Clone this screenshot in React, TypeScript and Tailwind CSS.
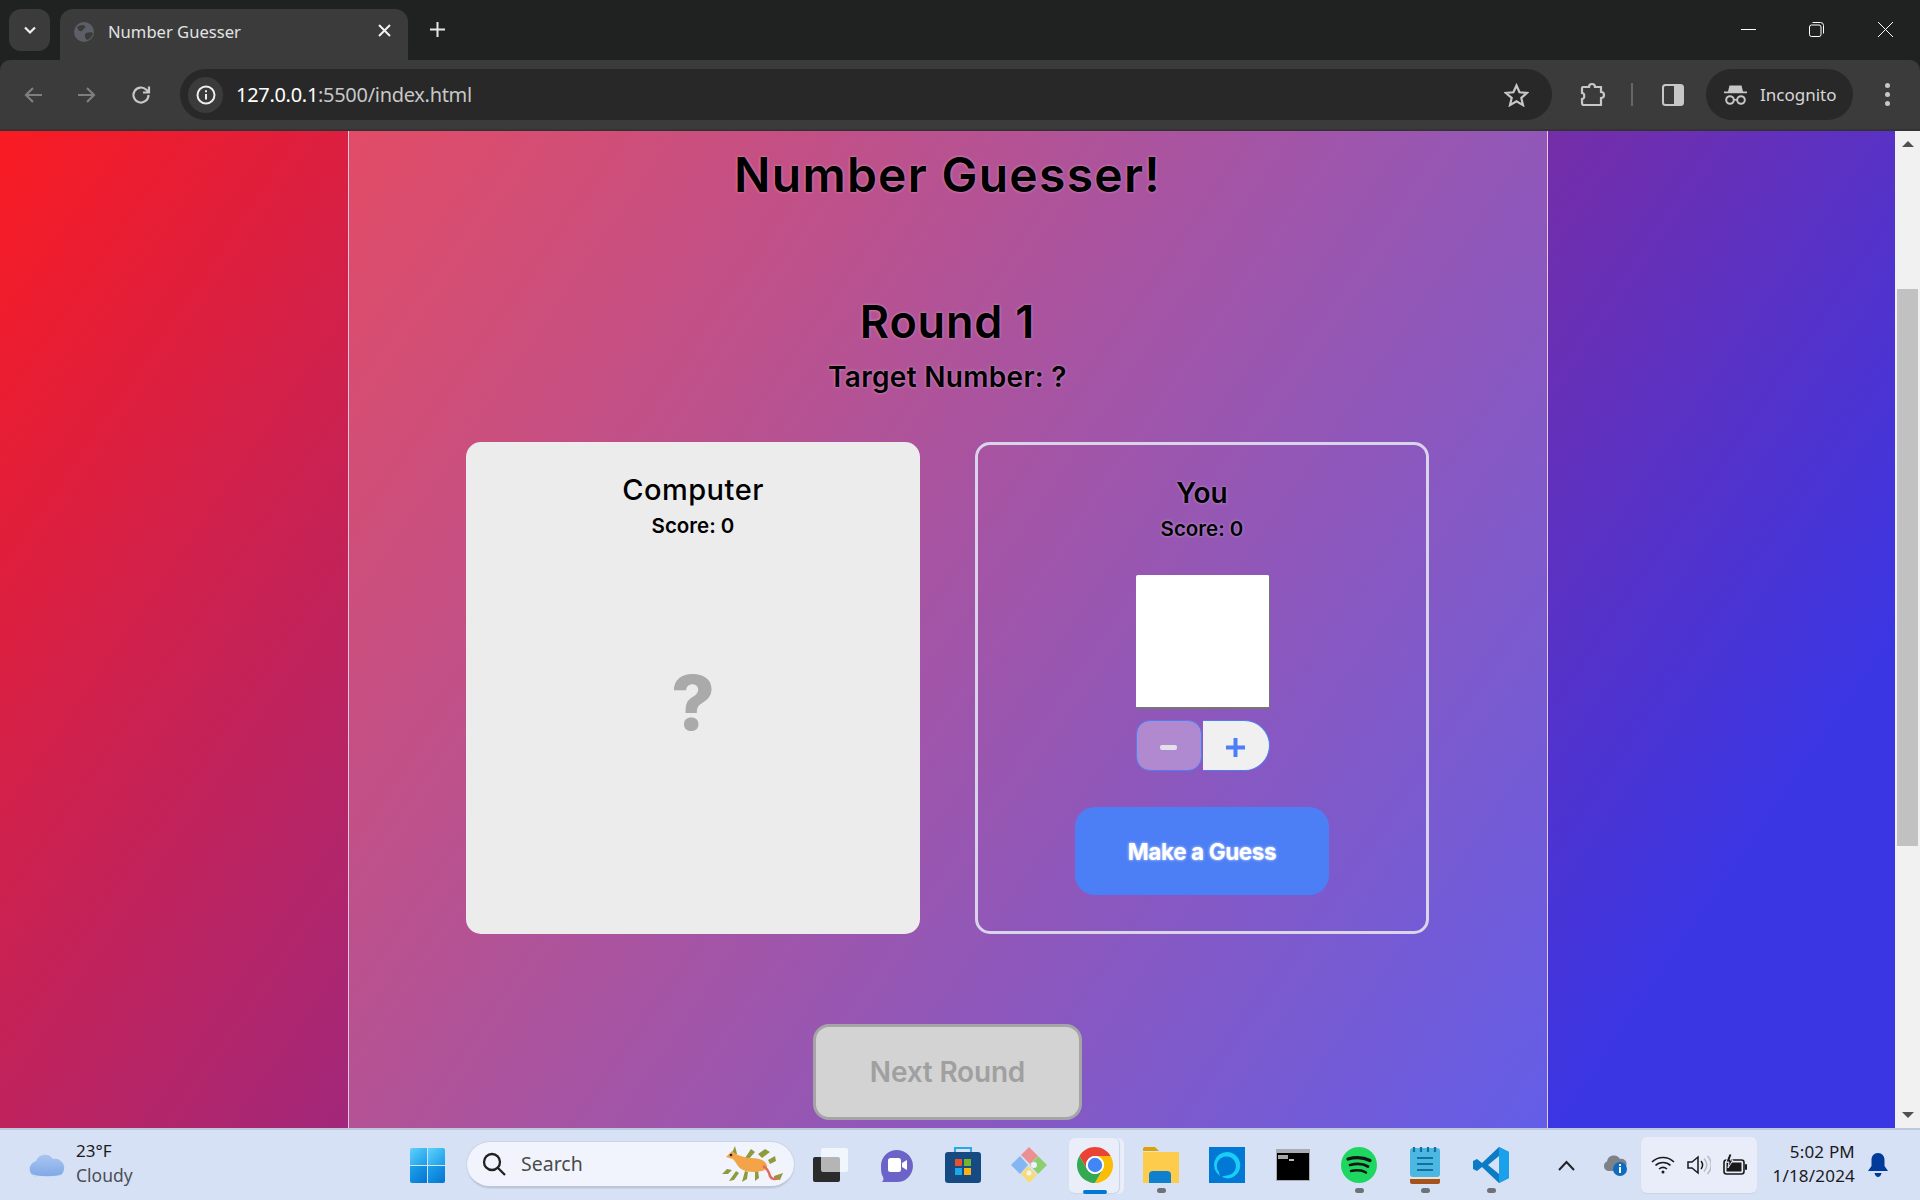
import React from "react";

function Back({ className }: { className?: string }) {
  return (
    <svg className={className} width="20" height="18" viewBox="0 0 20 18" fill="none" stroke="currentColor" strokeWidth="2.2">
      <path d="M19 9H3M10 2L3 9l7 7" />
    </svg>
  );
}

function Chrome() {
  return (
    <header className="shrink-0 bg-[#202221]">
      <div className="flex h-[60px] items-end pl-[9px]">
        <div className="mb-[9px] flex h-[42px] w-[41px] items-center justify-center rounded-[12px] bg-[#3b3b3b]">
          <svg width="14" height="9" viewBox="0 0 14 9" fill="none" stroke="#f0f0f0" strokeWidth="2.2"><path d="M2 1.5l5 5 5-5" /></svg>
        </div>
        <div className="relative ml-[10px] flex h-[51px] w-[348px] rounded-t-[13px] bg-[#3b3b3b] pl-[13px] pt-[12px]">
          <svg width="22" height="22" viewBox="0 0 22 22" className="shrink-0">
            <circle cx="11" cy="11" r="10" fill="#5c6066" />
            <path d="M4 6c3-2 6-3 8-1 1 2-2 3-3 5-2 1-4-1-5-4zM13 12c3-1 6-1 7 0-1 4-3 6-6 7-2-2-3-5-1-7z" fill="#3b3b3b" />
          </svg>
          <span className="ml-[13px] text-[16.6px] leading-[22px] text-[#e3e3e3] [font-family:'Noto_Sans',sans-serif]">Number Guesser</span>
          <svg className="absolute left-[318px] top-[15px]" width="13" height="13" viewBox="0 0 13 13" stroke="#f2f2f2" strokeWidth="2"><path d="M1 1l11 11M12 1L1 12" /></svg>
        </div>
        <svg className="mb-[23px] ml-[22px]" width="15" height="15" viewBox="0 0 15 15" stroke="#e6e6e6" strokeWidth="2"><path d="M7.5 0v15M0 7.5h15" /></svg>
        <div className="ml-auto mb-[23px] flex items-center pr-[27px]">
          <svg width="15" height="15" viewBox="0 0 15 15" stroke="#fff" strokeWidth="1"><path d="M0 7.5h15" /></svg>
          <svg className="ml-[53px]" width="15" height="15" viewBox="0 0 15 15" fill="none" stroke="#fff" strokeWidth="1"><rect x=".5" y="3" width="11.5" height="11.5" rx="2" /><path d="M3.5.5h8a3 3 0 013 3v8" /></svg>
          <svg className="ml-[54px]" width="15" height="15" viewBox="0 0 15 15" stroke="#fff" strokeWidth="1"><path d="M0 0l15 15M15 0L0 15" /></svg>
        </div>
      </div>
      <div className="flex h-[71px] items-start rounded-t-[10px] border-b-2 border-[#333] bg-[#3b3b3b] pl-[23px] pt-[9px]">
        <div className="flex h-[51px] items-center">
          <Back className="text-[#7f7f7f]" />
          <Back className="ml-[34px] rotate-180 text-[#7f7f7f]" />
          <svg className="ml-[34px]" width="20" height="20" viewBox="0 0 20 20" fill="none" stroke="#c7c7c7" strokeWidth="2.2"><path d="M17.5 10a7.5 7.5 0 11-2.2-5.3L18 7.5M18 1.5v6h-6" /></svg>
        </div>
        <div className="ml-[29px] flex h-[51px] w-[1372px] items-center rounded-full bg-[#282828] pl-[8px] pr-[23px]">
          <div className="flex h-[36px] w-[35px] items-center justify-center rounded-full bg-[#3b3b3b]">
            <svg width="20" height="20" viewBox="0 0 20 20" fill="none" stroke="#eee" strokeWidth="2"><circle cx="10" cy="10" r="8.5" /><path d="M10 9v5.5M10 5.2v2" /></svg>
          </div>
          <span className="ml-[13px] text-[20px] leading-none text-[#c7c7c7] [font-family:'Noto_Sans',sans-serif] tracking-[-0.3px]"><span className="text-white">127.0.0.1</span>:5500/index.html</span>
          <svg className="ml-auto" width="25" height="24" viewBox="0 0 25 24" fill="none" stroke="#c7c7c7" strokeWidth="2.2"><path d="M12.5 2.5l3 6.8 7.4.7-5.6 4.9 1.7 7.2-6.5-3.8-6.5 3.8 1.7-7.2L2 10l7.4-.7z" /></svg>
        </div>
        <div className="flex h-[51px] items-center">
          <svg className="ml-[28px]" width="26" height="26" viewBox="0 0 26 26" fill="none" stroke="#c7c7c7" strokeWidth="2.2"><path d="M3 5h6c0-4 6-4 6 0h6v5c4 0 4 6 0 6v7H4c-1.500 0-2-1-2-2v-4c3 0 3-6 0-6V6c0-.5.500-1 1-1z" /></svg>
          <div className="ml-[25px] h-[23px] w-[2px] bg-[#666]" />
          <svg className="ml-[29px]" width="22" height="22" viewBox="0 0 22 22"><rect x="1" y="1" width="20" height="20" rx="2.500" fill="none" stroke="#c7c7c7" strokeWidth="2" /><path d="M12 1h7a2 2 0 012 2v16a2 2 0 01-2 2h-7z" fill="#c7c7c7" /></svg>
          <div className="ml-[22px] flex h-[51px] w-[147px] items-center rounded-full bg-[#282828] pl-[18px]">
            <svg width="23" height="23" viewBox="0 0 23 23" fill="#c7c7c7"><path d="M5.500 2.500h12l1.500 6h4v1.800H0V8.500h4z" /><circle cx="6" cy="17" r="3.800" fill="none" stroke="#c7c7c7" strokeWidth="2" /><circle cx="17" cy="17" r="3.800" fill="none" stroke="#c7c7c7" strokeWidth="2" /><path d="M9.500 16h4v1.600h-4z" /></svg>
            <span className="ml-[13px] text-[17px] text-[#d7d7d7] [font-family:'Noto_Sans',sans-serif]">Incognito</span>
          </div>
          <div className="ml-[32px] flex flex-col gap-[4px]">
            <i className="block size-[5px] rounded-full bg-[#c7c7c7]" />
            <i className="block size-[5px] rounded-full bg-[#c7c7c7]" />
            <i className="block size-[5px] rounded-full bg-[#c7c7c7]" />
          </div>
        </div>
      </div>
    </header>
  );
}

function GamePanel() {
  const shadow = "[text-shadow:0_0_3px_rgba(255,255,255,0.45)]";
  return (
    <main className="flex min-w-0 flex-1 justify-center overflow-hidden bg-[linear-gradient(124.5deg,#f91b22_0%,#3a36e4_87.3%)] [font-family:Inter,sans-serif]">
      <div className="flex h-full w-[1200px] flex-col items-center border-x border-[#e8c8e0] bg-white/20">
        <h1 className={`mt-[21px] text-[48px] font-semibold leading-[46px] tracking-[1.27px] text-black ${shadow}`}>Number Guesser!</h1>
        <h2 className={`mt-[102px] text-[45px] font-semibold leading-[44px] tracking-[0.8px] text-black ${shadow}`}>Round 1</h2>
        <p className={`mt-[18px] text-[28px] font-semibold leading-[30px] tracking-[0.3px] text-black ${shadow}`}>Target Number: ?</p>
        <div className="mt-[50px] flex gap-[55px]">
          <section className="flex h-[492px] w-[454px] flex-col items-center rounded-[15px] bg-[#ececec]">
            <h3 className="mt-[32px] text-[29px] font-medium leading-[32px] tracking-[0.5px] text-black">Computer</h3>
            <p className="mt-[6px] text-[20.5px] font-semibold leading-[28px] text-black">Score: 0</p>
            <span className="mt-[120px] text-[76px] font-extrabold leading-[84px] text-[#aaaaaa]">?</span>
          </section>
          <section className="flex h-[492px] w-[454px] flex-col items-center rounded-[15px] border-[3px] border-[#d9d4ea]">
            <h3 className={`mt-[32px] text-[28px] font-semibold leading-[32px] text-black ${shadow}`}>You</h3>
            <p className={`mt-[6px] text-[20.5px] font-semibold leading-[28px] text-black ${shadow}`}>Score: 0</p>
            <div className="mt-[32px] ml-px h-[134px] w-[134px] rounded-[2px] border-b-2 border-r border-[#767676] bg-white" />
            <div className="mt-[11px] ml-px flex h-[51px] w-[134px]">
              <button className="flex w-[66px] items-center justify-center rounded-[14px] border border-[#4c7ff5] bg-white/30 text-[32px] font-bold text-[#e4e0ea]">
                <i className="mt-[4px] block h-[5px] w-[17px] rounded-[2px] bg-[#e4e0ea]" />
              </button>
              <button className="ml-px flex flex-1 items-center justify-center rounded-r-full border-y border-r border-[#4c7ff5] bg-[#f0f0f0]">
                <svg className="mt-[3px]" width="19" height="19" viewBox="0 0 19 19" stroke="#4c7ff5" strokeWidth="4"><path d="M9.500 0v19M0 9.500h19" /></svg>
              </button>
            </div>
            <button className="mt-[36px] h-[88px] w-[254px] rounded-[20px] bg-[#4c7ff5] pt-[2px] text-[22.5px] font-bold tracking-[-0.4px] text-white [text-shadow:0_0_3px_rgba(255,255,255,0.8)]">Make a Guess</button>
          </section>
        </div>
        <button className="mt-[90px] h-[96px] w-[269px] shrink-0 rounded-[16px] border-[3px] border-[#a5a5a5] bg-[#d3d3d3] text-[28px] font-semibold tracking-[-0.2px] text-[#a0a0a0]">Next Round</button>
      </div>
    </main>
  );
}

function Scrollbar() {
  return (
    <aside className="flex w-[25px] shrink-0 flex-col items-center bg-[#f1f1f1]">
      <svg className="mt-[10px]" width="12" height="6" viewBox="0 0 12 6" fill="#505050"><path d="M6 0l6 6H0z" /></svg>
      <div className="mt-[142px] h-[557px] w-[21px] bg-[#c1c1c1]" />
      <svg className="mt-[266px]" width="12" height="6" viewBox="0 0 12 6" fill="#505050"><path d="M6 6L0 0h12z" /></svg>
    </aside>
  );
}

function Cloud() {
  return (
    <svg width="36" height="24" viewBox="0 0 36 24">
      <defs>
        <linearGradient id="cl" x1="0" y1="0" x2="0" y2="1"><stop offset="0" stopColor="#a9c6f2" /><stop offset="1" stopColor="#7fa8e6" /></linearGradient>
      </defs>
      <path d="M8 24a8 8 0 01-1-15.800A9.500 9.500 0 0124 6a8.500 8.500 0 014 18z" fill="url(#cl)" />
      <path d="M2 21c8 3 25 3 32 0-2 3-4 3-6 3H8c-3 0-5-1-6-3z" fill="#cfe0f8" />
    </svg>
  );
}

function WinLogo() {
  return (
    <svg width="35" height="35" viewBox="0 0 35 35" className="shrink-0">
      <defs>
        <linearGradient id="w1" x1="0" y1="0" x2="1" y2="1"><stop offset="0" stopColor="#5fd2fb" /><stop offset="1" stopColor="#1a9be8" /></linearGradient>
        <linearGradient id="w2" x1="0" y1="0" x2="1" y2="1"><stop offset="0" stopColor="#1ca4ec" /><stop offset="1" stopColor="#0673d0" /></linearGradient>
      </defs>
      <path d="M0 2a2 2 0 012-2h15v17H0z" fill="url(#w1)" />
      <path d="M18 0h15a2 2 0 012 2v15H18z" fill="url(#w1)" />
      <path d="M0 18h17v17H2a2 2 0 01-2-2z" fill="url(#w2)" />
      <path d="M18 18h17v15a2 2 0 01-2 2H18z" fill="url(#w2)" />
    </svg>
  );
}

function SeaDragon() {
  return (
    <svg width="65" height="38" viewBox="0 0 65 38" className="shrink-0">
      <g fill="#8e9a3c">
        <path d="M10 10l4-9 2 8zM24 13l6-9 4 3-7 8zM37 9l7-5 5 3-8 6zM47 15l7-4 1 5-6 3zM15 26L8 36l5-1 5-7zM24 26l-3 11 5-3 1-7zM34 25l0 11 4-3-1-8zM6 24l-5 5 6 0 4-4zM53 31l9-3-3 7-6-1z" />
      </g>
      <path d="M5 12l6-6 4 3c4 2 10 4 15 4 8 0 15 2 16 8 1 4-6 6-14 6-8 0-14-3-17-9l-3-4z" fill="#f3a448" />
      <path d="M42 21c4 2 6 6 7 10 1 3 5 4 8 2" fill="none" stroke="#e0685c" strokeWidth="2.500" />
      <circle cx="10" cy="10" r="1.300" fill="#222" />
    </svg>
  );
}

function SearchBox() {
  return (
    <div className="ml-[22px] flex h-[46px] w-[327px] shrink-0 items-center rounded-full border-b-2 border-[#bcc6da] bg-[#f1f4fc] pl-[15px] pr-[8px] shadow-[0_0_0_1px_#ccd5e6]">
      <svg width="24" height="24" viewBox="0 0 24 24" fill="none" stroke="#202020" strokeWidth="2.300"><circle cx="10" cy="10" r="8" /><path d="M16 16l7 7" /></svg>
      <span className="ml-[15px] text-[19.5px] text-[#4a4a4a] [font-family:'Noto_Sans',sans-serif]">Search</span>
      <div className="ml-auto"><SeaDragon /></div>
    </div>
  );
}

const icons: { key: string; dot?: boolean; active?: boolean; svg: React.ReactNode }[] = [
  { key: "task", svg: (
    <svg width="36" height="36" viewBox="0 0 36 36"><rect x="0" y="10" width="27" height="25" rx="2" fill="#2b2b2b" /><rect x="8" y="1" width="27" height="24" rx="2" fill="#ffffff" fillOpacity=".65" /></svg>
  ) },
  { key: "meet", svg: (
    <svg width="36" height="36" viewBox="0 0 36 36"><path d="M2 18a16 16 0 1116 17H3c2-2 2-4 0-7-1-3-1-6-1-10z" fill="#6b63c8" /><rect x="9" y="11" width="13" height="14" rx="2.500" fill="#fff" /><path d="M23 16l5-3v10l-5-3z" fill="#fff" /></svg>
  ) },
  { key: "store", svg: (
    <svg width="36" height="38" viewBox="0 0 36 38"><path d="M10 8V2h16v6" fill="none" stroke="#2aa7e8" strokeWidth="2" /><rect y="6" width="36" height="31" rx="3" fill="#164a82" /><rect x="10" y="13" width="7" height="7" fill="#e8512d" /><rect x="19" y="13" width="7" height="7" fill="#75b52d" /><rect x="10" y="22" width="7" height="7" fill="#1da6e8" /><rect x="19" y="22" width="7" height="7" fill="#fbb313" /></svg>
  ) },
  { key: "gem", svg: (
    <svg width="36" height="36" viewBox="0 0 36 36"><path d="M18 0l9 9-8 8-9-9z" fill="#ec8f93" /><path d="M27 9l9 9-9 9-8-9z" fill="#8dcf6e" /><path d="M17 19l9 9-8 8-8-9z" fill="#f6dc78" /><path d="M9 9l8 9-8 9-9-9z" fill="#86b5f3" /><circle cx="23" cy="18" r="3" fill="#eef2fb" /><circle cx="18" cy="26" r="2.500" fill="#eef2fb" /></svg>
  ) },
  { key: "chrome", active: true, svg: (
    <svg width="36" height="36" viewBox="4 4 40 40"><path d="M6.680 14A20 20 0 0141.320 14H24A10 10 0 0015.340 29z" fill="#ea4335" /><path d="M6.680 14A20 20 0 0024 44L32.660 29A10 10 0 0115.340 29z" fill="#34a853" /><path d="M41.320 14A20 20 0 0124 44L32.660 29A10 10 0 0024 14z" fill="#fbbc04" /><circle cx="24" cy="24" r="10" fill="#fff" /><circle cx="24" cy="24" r="8" fill="#4285f4" /></svg>
  ) },
  { key: "folder", dot: true, svg: (
    <svg width="36" height="36" viewBox="0 0 36 36"><path d="M0 2a2 2 0 012-2h10l4 4H0z" fill="#e0a000" /><path d="M0 5h36v31H0z" fill="#fdcc4d" /><path d="M6 28a4 4 0 014-4h14a4 4 0 014 4v8H6z" fill="#0f7fd0" /></svg>
  ) },
  { key: "alexa", svg: (
    <svg width="36" height="36" viewBox="0 0 36 36"><rect width="36" height="36" fill="#0078d4" /><path d="M18 5a13 13 0 00-7 24c-1-3-1-4-1-4a9.500 9.500 0 118 3.500c-2 .2-4 .5-5 1.500l5 1.500A13 13 0 0018 5z" fill="#19cdf6" /></svg>
  ) },
  { key: "cmd", svg: (
    <svg width="36" height="36" viewBox="0 0 36 36"><rect width="34" height="32" x="1" y="2" fill="#a9adb3" /><rect x="2" y="6" width="32" height="27" fill="#000" /><rect x="3" y="8" width="10" height="4" fill="#cfcfcf" fillOpacity=".8" /><path d="M14 12h5v2h-5z" fill="#bbb" /></svg>
  ) },
  { key: "spotify", dot: true, svg: (
    <svg width="36" height="36" viewBox="0 0 36 36"><circle cx="18" cy="18" r="18" fill="#1ed760" /><g fill="none" stroke="#151515" strokeLinecap="round"><path d="M7 12c7-2 15-2 22 1.500" strokeWidth="3.200" /><path d="M9 18c6-1.500 13-1.500 18 1.500" strokeWidth="2.800" /><path d="M10 24c5-1 11-1 15 1.500" strokeWidth="2.400" /></g></svg>
  ) },
  { key: "notes", dot: true, svg: (
    <svg width="30" height="38" viewBox="0 0 30 38"><rect y="2" width="30" height="29" rx="3" fill="#4cb7e0" /><path d="M0 31h30v3H0z" fill="#e8e4da" /><path d="M0 33h30v3a2 2 0 01-2 2H2a2 2 0 01-2-2z" fill="#a5521f" /><g fill="#1070a0"><path d="M7 11h16v2H7zM7 17h16v2H7zM7 23h16v2H7z" /></g><g stroke="#1070a0" strokeWidth="2.200"><path d="M4 1v5M11 1v5M18 1v5M25 1v5" /></g></svg>
  ) },
  { key: "code", dot: true, svg: (
    <svg width="36" height="36" viewBox="0 0 36 36"><path d="M26 0l10 5v26l-10 5L9 20l-5 4-4-2V14l4-2 5 4z" fill="#0a7bc4" /><path d="M26 9L15 18l11 9z" fill="#d6e1f5" /><path d="M26 0l10 5v26l-10 5z" fill="#1ba0ec" /></svg>
  ) },
];

function AppCell({ active, dot, svg }: { active?: boolean; dot?: boolean; svg: React.ReactNode }) {
  return (
    <div className="relative flex h-full w-[66px] shrink-0 items-center justify-center">
      {active && <div className="absolute left-[12px] top-[8px] h-[56px] w-[50px] rounded-[6px] bg-[#e9eef9]" />}
      {active && <div className="absolute left-[7px] top-[8px] h-[56px] w-[50px] rounded-[6px] border-b border-[#ccd6e8] bg-[#e9eef9] shadow-[1px_0_1px_#c8d2e6]" />}
      <div className="relative">{svg}</div>
      {active && <div className="absolute bottom-[6px] left-[21px] h-[4px] w-[24px] rounded-full bg-[#0078d4]" />}
      {dot && <div className="absolute bottom-[7px] left-[29px] h-[5px] w-[9px] rounded-full bg-[#6e7278]" />}
    </div>
  );
}

function Taskbar() {
  return (
    <footer className="flex h-[72px] shrink-0 items-center border-t-2 border-[#bcc8dc] bg-[#d6e1f5] text-[#1a1a1a] [font-family:'Noto_Sans',sans-serif]">
      <div className="flex w-[410px] shrink-0 items-center pl-[29px]">
        <Cloud />
        <div className="-mt-[4px] ml-[11px] flex flex-col">
          <span className="text-[17px] leading-[24px]">23°F</span>
          <span className="text-[17.5px] leading-[24px] text-[#4d4f55]">Cloudy</span>
        </div>
      </div>
      <WinLogo />
      <SearchBox />
      <div className="ml-[4px] flex h-full">
        {icons.map((i) => (
          <AppCell key={i.key} active={i.active} dot={i.dot} svg={i.svg} />
        ))}
      </div>
      <svg className="ml-[34px]" width="17" height="11" viewBox="0 0 17 11" fill="none" stroke="#222" strokeWidth="2"><path d="M1 10l7.500-8L16 10" /></svg>
      <svg className="ml-[28px]" width="25" height="22" viewBox="0 0 25 22"><path d="M5 17a5 5 0 01-1-9.500A7 7 0 0117 5a5 5 0 016 7v5z" fill="#7d8288" /><circle cx="17" cy="15" r="7" fill="#0f6cbd" /><path d="M16 13h2v6h-2zM16 10h2v2h-2z" fill="#fff" /></svg>
      <div className="ml-[13px] flex h-[56px] w-[116px] shrink-0 items-center rounded-[6px] bg-[#e8edf9] pl-[10px] shadow-[0_1px_1px_#ccd5e6]">
        <svg width="24" height="18" viewBox="0 0 24 18" fill="none" stroke="#1a1a1a" strokeWidth="1.600"><path d="M1 6c6-6 16-6 22 0M4.500 9.500c4-4 11-4 15 0M8 13c2.500-2 5.500-2 8 0" /><circle cx="12" cy="16" r="1.500" fill="#1a1a1a" stroke="none" /></svg>
        <svg className="ml-[12px]" width="24" height="20" viewBox="0 0 24 20" fill="none" stroke="#1a1a1a" strokeWidth="1.500"><path d="M1 7h4l6-5v16l-6-5H1z" /><path d="M14 6c2 2.500 2 5.500 0 8" /><path d="M17 3.500c3.500 4 3.500 9 0 13M20.500 1c5 5.500 5 12.500 0 18" stroke="#b5b9c0" /></svg>
        <svg className="ml-[12px]" width="24" height="22" viewBox="0 0 24 22"><rect x="1" y="6" width="20" height="14" rx="2.500" fill="none" stroke="#1a1a1a" strokeWidth="1.600" /><rect x="3.500" y="8.500" width="15" height="9" fill="#1a1a1a" /><rect x="22" y="10" width="2" height="6" rx="1" fill="#1a1a1a" /><path d="M6 0L3 8h3l-1 6 5-8H7l2-6z" fill="#1a1a1a" stroke="#e8edf9" strokeWidth="1" /></svg>
      </div>
      <div className="-mt-[2px] ml-auto flex flex-col items-end text-[17px] leading-[24px] tracking-[0.2px]">
        <span>5:02 PM</span>
        <span>1/18/2024</span>
      </div>
      <svg className="ml-[13px] mr-[32px]" width="20" height="24" viewBox="0 0 20 24" fill="#003a9b"><path d="M10 0c4 0 6.500 3 6.500 7v6l3.500 5H0l3.500-5V7C3.500 3 6 0 10 0zM6.500 20h7c-.5 2.500-2 4-3.500 4s-3-1.500-3.500-4z" /></svg>
    </footer>
  );
}

export default function App() {
  return (
    <div className="flex h-[1200px] w-[1920px] flex-col overflow-hidden">
      <Chrome />
      <div className="flex min-h-0 flex-1">
        <GamePanel />
        <Scrollbar />
      </div>
      <Taskbar />
    </div>
  );
}
